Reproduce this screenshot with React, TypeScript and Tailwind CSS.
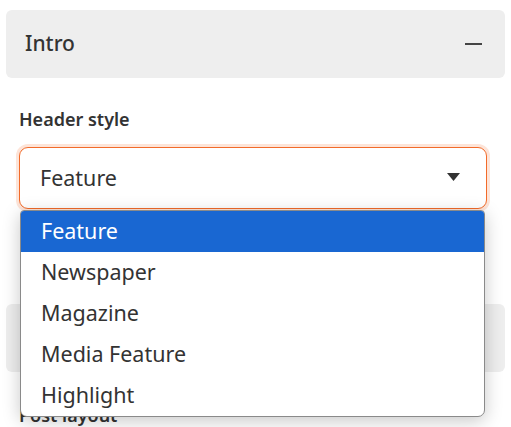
import { useState } from 'react'

const opciones = ['Feature', 'Newspaper', 'Magazine', 'Media Feature', 'Highlight']

export default function App() {
  const [valor] = useState('Feature')

  return (
    <div className="h-[427px] overflow-hidden bg-white text-[#333] font-['Noto_Sans','Open_Sans',sans-serif]">
      <div className="px-[6px] pt-[10px]">
        <div className="h-[68px] rounded-[6px] bg-[#eeeeee] flex items-center justify-between pl-[19px] pr-[23px]">
          <span className="text-[21px] font-medium text-[#333]">Intro</span>
          <span className="block w-[17px] h-[2px] bg-[#444]" />
        </div>
      </div>

      <div className="px-[19px] pt-[28px]">
        <p className="text-[18px] font-semibold leading-[26px] text-[#333]">Header style</p>

        <div className="relative mt-[15px] mr-[5px]">
          <div className="h-[62px] rounded-[9px] border border-[#f26b2a] ring-[3px] ring-[#fde4d8] bg-white flex items-center justify-between pl-[20px] pr-[26px]">
            <span className="text-[21.5px] text-[#333]">{valor}</span>
            <svg width="13" height="9" viewBox="0 0 13 9" className="mt-[-2px]">
              <path d="M0 0 H13 L6.5 8 Z" fill="#333" />
            </svg>
          </div>

          <ul className="absolute z-10 left-[1px] right-[2px] top-[63px] bg-white border border-[#8a8a8a] rounded-t-[4px] rounded-b-[7px] shadow-[0_4px_18px_rgba(0,0,0,0.22)] overflow-hidden">
            {opciones.map((o) => (
              <li
                key={o}
                className={
                  o === valor
                    ? 'h-[41px] pl-[20px] flex items-center text-[21.5px] bg-[#1967d2] text-white'
                    : 'h-[41px] pl-[20px] flex items-center text-[21.5px] text-[#333]'
                }
              >
                {o}
              </li>
            ))}
          </ul>
        </div>
      </div>

      <div className="px-[6px] mt-[95px]">
        <div className="h-[68px] rounded-[6px] bg-[#eeeeee]" />
      </div>

      <div className="px-[19px] pt-[30px]">
        <p className="text-[18px] font-semibold leading-[26px] text-[#333]">Post layout</p>
      </div>
    </div>
  )
}
